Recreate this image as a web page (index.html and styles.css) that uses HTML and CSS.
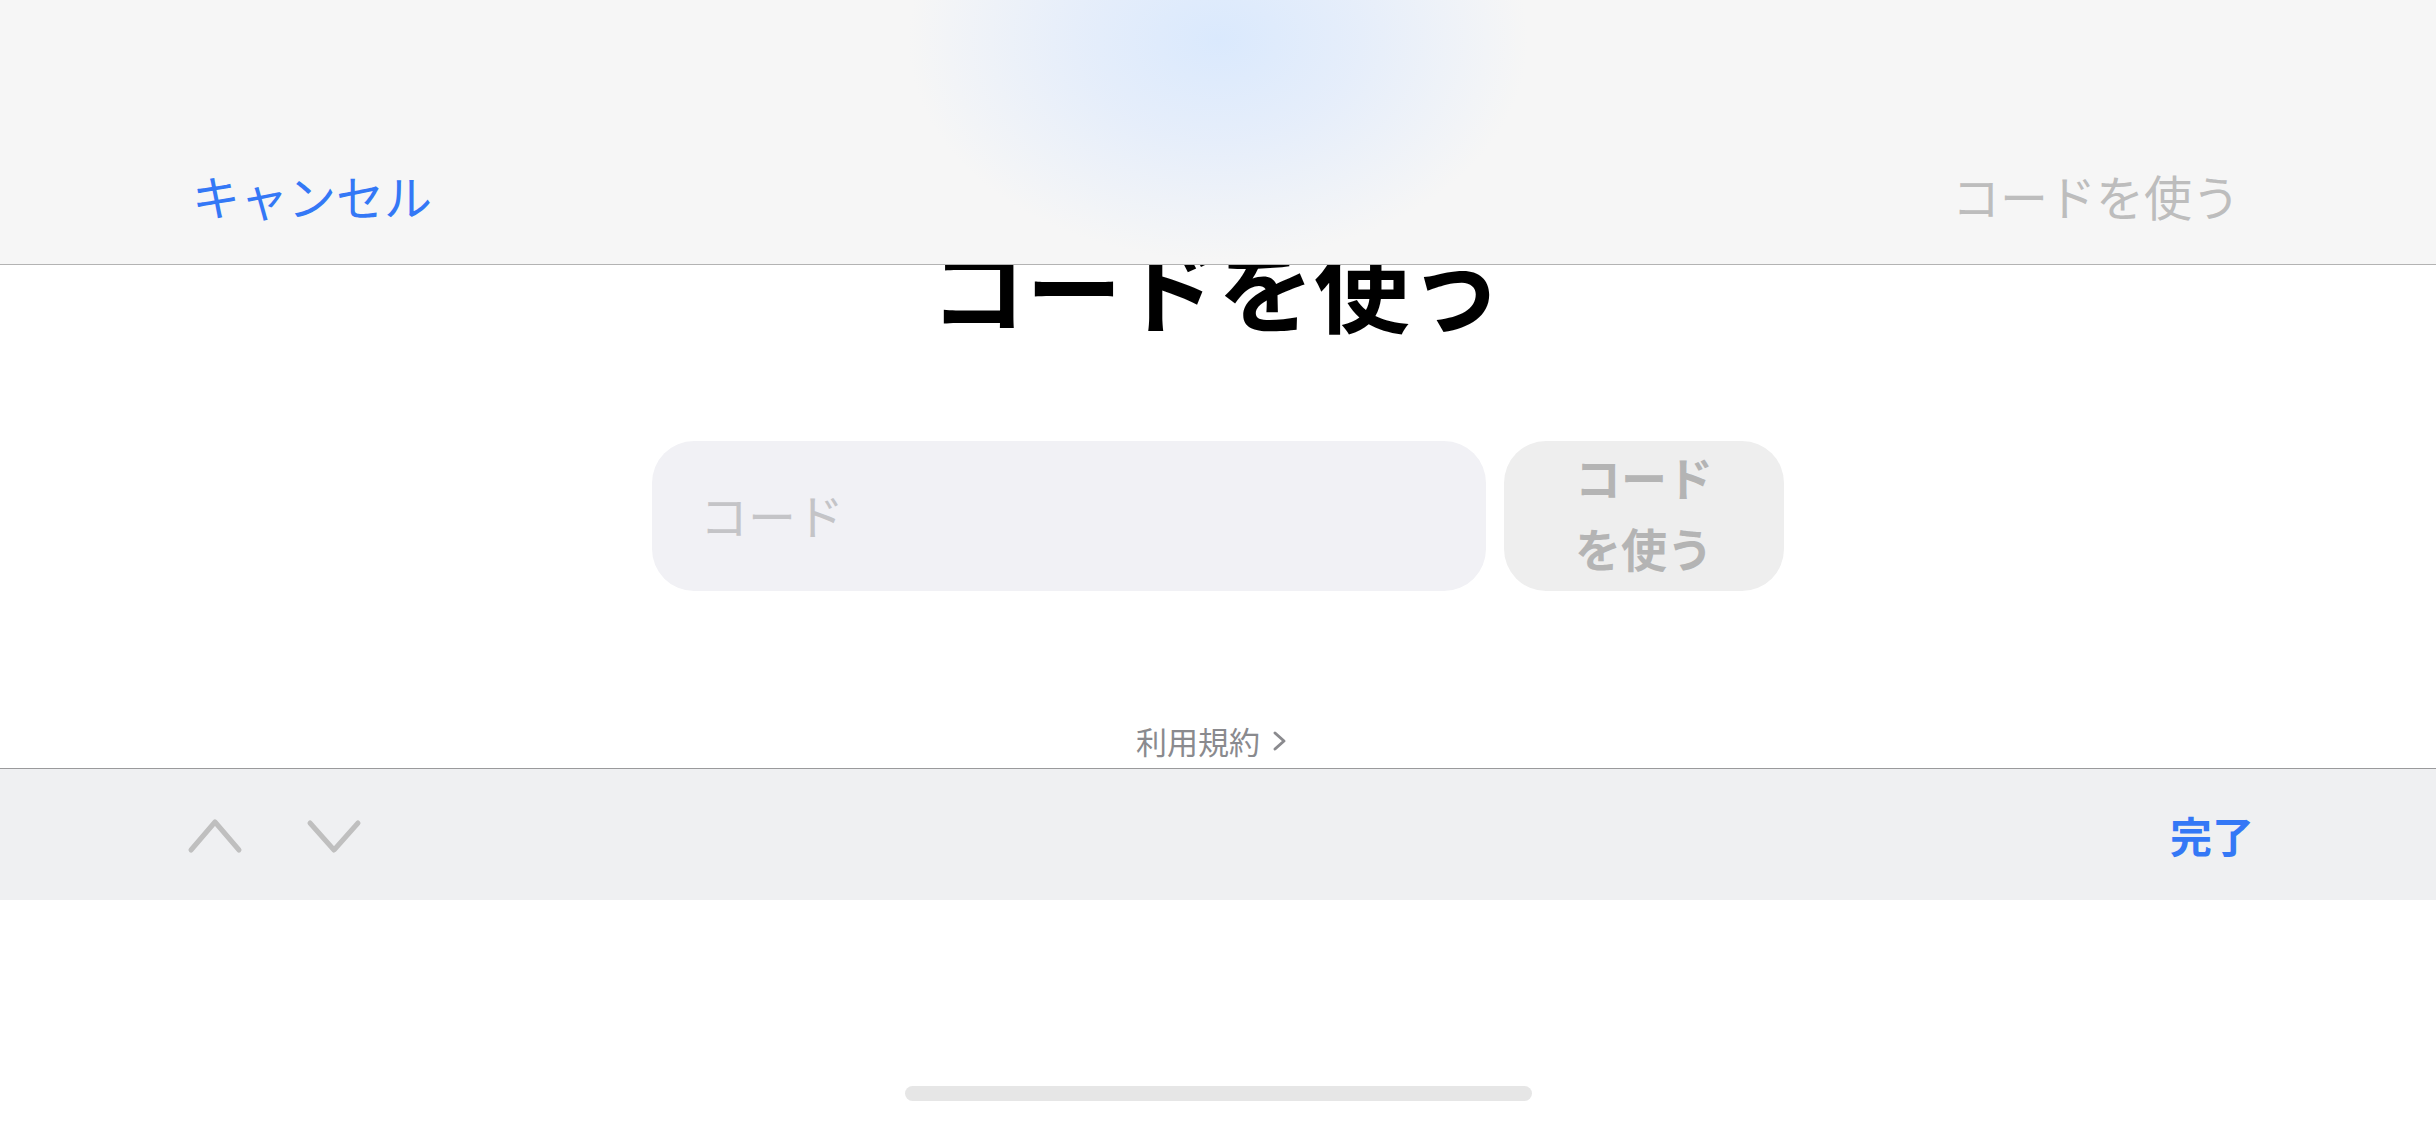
FILE: index.html
```html
<!DOCTYPE html>
<html lang="ja">
<head>
  <meta charset="UTF-8">
  <meta name="viewport" content="width=device-width, initial-scale=1.0">
  <title>コードを使う</title>
  <link rel="stylesheet" href="styles.css">
</head>
<body>
  <div class="screen">
    <!-- Навбар поверх листа -->
    <header class="nav">
      <button class="nav-button cancel">キャンセル</button>
      <button class="nav-button disabled">コードを使う</button>
    </header>

    <main class="sheet">
      <h1 class="title">コードを使う</h1>
      <div class="redeem-row">
        <input class="code-field" type="text" placeholder="コード">
        <button class="redeem-button">コード<br>を使う</button>
      </div>
      <a class="terms" href="#">利用規約
        <svg class="terms-chevron" width="16" height="22" viewBox="0 0 16 22">
          <path d="M3 3 L12 11 L3 19" fill="none" stroke="#8a8a8e" stroke-width="3" stroke-linecap="round" stroke-linejoin="round"/>
        </svg>
      </a>
    </main>

    <!-- Панель над клавиатурой -->
    <div class="toolbar">
      <div class="arrows">
        <svg width="56" height="36" viewBox="0 0 56 36">
          <path d="M4 32 L28 4 L52 32" fill="none" stroke="#bfbfbf" stroke-width="5" stroke-linecap="round" stroke-linejoin="round"/>
        </svg>
        <svg width="56" height="36" viewBox="0 0 56 36">
          <path d="M4 5 L28 32 L52 5" fill="none" stroke="#bfbfbf" stroke-width="5" stroke-linecap="round" stroke-linejoin="round"/>
        </svg>
      </div>
      <button class="done">完了</button>
    </div>

    <div class="bottom-area">
      <div class="home-indicator"></div>
    </div>
  </div>
</body>
</html>
```

FILE: styles.css
```css
body {
  margin: 0;
  background-color: #ffffff;
  font-family: "Noto Sans CJK JP", "Noto Sans", sans-serif;
  color: #000000;
}

button {
  font-family: inherit;
  border: none;
  background: none;
  padding: 0;
  margin: 0;
  cursor: pointer;
}

.screen {
  position: relative;
  width: 2436px;
  height: 1125px;
  overflow: hidden;
  display: flex;
  flex-direction: column;
}

.nav {
  position: absolute;
  top: 0;
  left: 0;
  right: 0;
  z-index: 2;
  height: 265px;
  box-sizing: border-box;
  display: flex;
  justify-content: space-between;
  align-items: flex-start;
  padding: 171px 196px 0 192px;
  border-bottom: 1px solid #b3b3b3;
  background:
    radial-gradient(ellipse 310px 220px at 1218px 40px, rgba(218, 233, 253, 1) 0%, rgba(224, 235, 252, 0.75) 45%, rgba(246, 246, 246, 0) 100%),
    #f6f6f6;
}

.nav-button {
  font-size: 48px;
  line-height: 48px;
}

.nav-button.cancel {
  color: #3478f6;
}

.nav-button.disabled {
  color: #bdbdbd;
}

.sheet {
  height: 768px;
  box-sizing: border-box;
  display: flex;
  flex-direction: column;
  align-items: center;
  padding-top: 236px;
  padding-bottom: 12px;
}

.title {
  margin: 0;
  font-size: 96px;
  line-height: 96px;
  font-weight: 700;
}

.redeem-row {
  display: flex;
  gap: 18px;
  margin-top: 109px;
}

.code-field {
  width: 834px;
  height: 150px;
  box-sizing: border-box;
  padding: 0 48px 5px;
  border: none;
  outline: none;
  border-radius: 42px;
  background-color: #f1f1f5;
  font-family: inherit;
  font-size: 48px;
  color: #000000;
}

.code-field::placeholder {
  color: #c4c4c7;
}

.redeem-button {
  width: 280px;
  height: 150px;
  box-sizing: border-box;
  padding-bottom: 8px;
  border-radius: 42px;
  background-color: #eeeeee;
  color: #b4b4b4;
  font-size: 46px;
  font-weight: 700;
  line-height: 71px;
  text-align: center;
}

.terms {
  margin-top: auto;
  margin-right: 12px;
  display: flex;
  align-items: center;
  gap: 12px;
  font-size: 31px;
  line-height: 31px;
  color: #8a8a8e;
  text-decoration: none;
}

.toolbar {
  height: 132px;
  box-sizing: border-box;
  border-top: 1px solid #9a9a9c;
  background-color: #eff0f2;
  display: flex;
  justify-content: space-between;
  align-items: center;
  padding: 0 182px 0 187px;
}

.arrows {
  display: flex;
  gap: 63px;
  margin-top: 2px;
}

.arrows svg {
  display: block;
}

.done {
  font-size: 42px;
  line-height: 42px;
  font-weight: 700;
  color: #3478f6;
}

.bottom-area {
  flex: 1;
  display: flex;
  justify-content: center;
  align-items: flex-end;
  padding-bottom: 24px;
}

.home-indicator {
  width: 627px;
  height: 15px;
  border-radius: 8px;
  background-color: #e6e6e6;
}
```
